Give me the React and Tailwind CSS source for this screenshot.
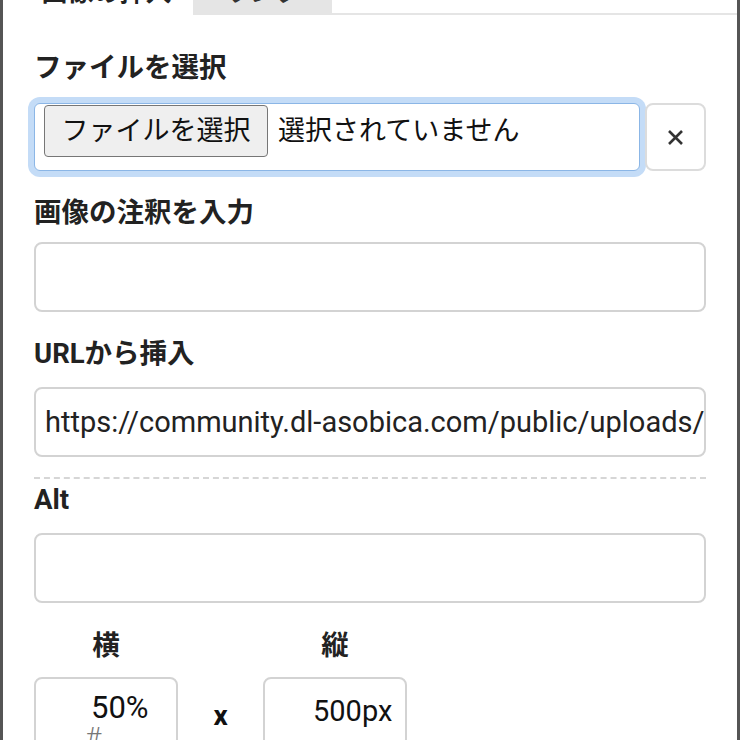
import React from "react";

const font = { fontFamily: "Roboto, 'Noto Sans CJK JP', 'Noto Sans', sans-serif" };

function Label({ children, className = "" }) {
  return (
    <div className={"text-[27.5px] font-bold leading-[36px] h-[36px] text-[#222] " + className}>
      {children}
    </div>
  );
}

function TextBox({ children, className = "" }) {
  return (
    <div
      className={
        "h-[70px] border-2 border-[#d3d3d3] rounded-[8px] bg-white flex items-center pl-[9px] overflow-hidden " +
        className
      }
    >
      {children}
    </div>
  );
}

export default function App() {
  return (
    <div
      className="w-[740px] h-[740px] overflow-hidden bg-white border-x-[3px] border-[#555] flex flex-col"
      style={font}
    >
      {/* tabs */}
      <div className="flex h-[15px] items-end shrink-0">
        <div className="w-[17px] h-[15px]" />
        <div className="w-[173px] h-[55px] bg-white flex items-end justify-center pb-[8px]">
          <span className="text-[26px] leading-[30px] font-bold text-[#222]">画像の挿入</span>
        </div>
        <div className="w-[139px] h-[55px] bg-[#e5e5e5] flex items-end justify-center pb-[8px]">
          <span className="text-[26px] leading-[30px] font-bold text-[#333]">リンク</span>
        </div>
        <div className="flex-1 h-[2px] bg-[#e5e5e5]" />
      </div>

      <div className="px-[31px] flex flex-col">
        <Label className="mt-[35px]">ファイルを選択</Label>
        <div className="mt-[17px] flex gap-[5px] h-[68px]">
          <div className="flex-1 h-[68px] border border-[#8bb6e6] rounded-[6px] ring-[6px] ring-[#c4dcf7] bg-white flex items-start pt-[1px] pl-[9px]">
            <div className="w-[224px] h-[52px] bg-[#efefef] border border-[#767676] rounded-[4px] flex items-center justify-center text-[27px] text-[#111] leading-[36px]">
              ファイルを選択
            </div>
            <div className="ml-[10px] h-[52px] flex items-center text-[27px] text-[#111] leading-[36px]">
              選択されていません
            </div>
          </div>
          <div className="w-[61px] h-[68px] border-2 border-[#dcdcdc] rounded-[8px] bg-white flex items-center justify-center relative z-10">
            <svg width="17" height="17" viewBox="0 0 17 17">
              <path d="M2 2L15 15M15 2L2 15" stroke="#333" strokeWidth="2.6" strokeLinecap="butt" />
            </svg>
          </div>
        </div>

        <Label className="mt-[24px]">画像の注釈を入力</Label>
        <TextBox className="mt-[11px]" />

        <Label className="mt-[24px]">URLから挿入</Label>
        <TextBox className="mt-[15px]">
          <span className="text-[29px] leading-[36px] text-[#222] whitespace-nowrap">
            https://community.dl-asobica.com/public/uploads/images/
          </span>
        </TextBox>

        <div className="mt-[20px] border-t-2 border-dashed border-[#d6d6d6]" />
        <Label className="mt-[3px]">Alt</Label>
        <TextBox className="mt-[15px]" />

        <div className="mt-[25px] flex">
          <div className="w-[144px] text-center text-[27.5px] font-bold leading-[36px] text-[#222]">横</div>
          <div className="w-[85px]" />
          <div className="w-[144px] text-center text-[27.5px] font-bold leading-[36px] text-[#222]">縦</div>
        </div>
        <div className="mt-[13px] flex">
          <div className="w-[144px] h-[70px] border-2 border-[#d3d3d3] rounded-[8px] flex flex-col items-start pl-[55px] pt-[14px]">
            <span className="text-[31px] leading-[30px] text-[#111]">50%</span>
            <span className="text-[28px] font-light leading-[26px] text-[#777] mt-[2px] -ml-[6px]">#</span>
          </div>
          <div className="w-[85px] flex justify-center pt-[24px]">
            <span className="text-[28px] font-bold leading-[30px] text-[#111]">x</span>
          </div>
          <div className="w-[144px] h-[70px] border-2 border-[#d3d3d3] rounded-[8px] flex items-start pl-[48px] pt-[17px]">
            <span className="text-[29px] leading-[30px] text-[#111]">500px</span>
          </div>
        </div>
      </div>
    </div>
  );
}
